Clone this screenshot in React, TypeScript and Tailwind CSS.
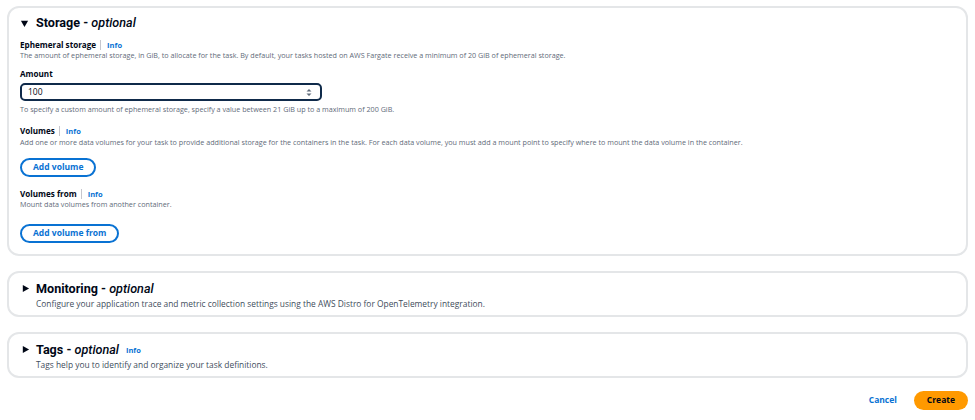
import React, { useState } from 'react';

const font = { fontFamily: '"Open Sans", "Noto Sans", Arial, sans-serif' };
const heading = { fontFamily: 'Roboto, "Open Sans", Arial, sans-serif' };

function InfoLink() {
  return <span className="ml-[4px] border-l border-[#c6c6cd] pl-[6px] text-[7.5px] font-bold leading-[10px] text-[#0972d3]">Info</span>;
}

function FieldLabel({ children, info = true }: { children: React.ReactNode; info?: boolean }) {
  return (
    <div className="flex h-[11px] items-center text-[8.1px] font-bold leading-[11px] text-[#000716]">
      {children}
      {info && <InfoLink />}
    </div>
  );
}

function Hint({ children }: { children: React.ReactNode }) {
  return <p className="h-[10px] text-[7.2px] leading-[10px] text-[#5f6b7a]">{children}</p>;
}

function OutlineButton({ children }: { children: React.ReactNode }) {
  return (
    <button className="flex h-[19px] items-center rounded-full border-2 border-[#0972d3] px-[11px] text-[8.5px] font-bold text-[#0972d3]">
      {children}
    </button>
  );
}

function Triangle({ open }: { open: boolean }) {
  return (
    <svg width="9" height="9" viewBox="0 0 10 10" className="shrink-0">
      {open ? <path d="M1 2 L9 2 L5 9 Z" fill="#000716" /> : <path d="M2 1 L9 5 L2 9 Z" fill="#000716" />}
    </svg>
  );
}

function CollapsedSection({ title, desc, info }: { title: string; desc: string; info?: boolean }) {
  return (
    <section className="h-[46px] rounded-[12px] border-2 border-[#e4e6e8] pl-[12px] pt-[7px]">
      <div className="flex h-[17px] items-center gap-[6px]">
        <Triangle open={false} />
        <h2 style={heading} className="text-[12.6px] font-bold leading-[17px] text-[#000716]">
          {title} - <em className="font-medium">optional</em>
        </h2>
        {info && <span className="ml-[1px] mt-[2px] text-[7.5px] font-bold text-[#0972d3]">Info</span>}
      </div>
      <p className="ml-[15px] mt-[1px] text-[8.4px] leading-[11px] text-[#414d5c]">{desc}</p>
    </section>
  );
}

export default function App() {
  const [amount, setAmount] = useState('100');

  return (
    <div style={font} className="h-[420px] w-[975px] overflow-hidden bg-white px-[7px] pt-[6px]">
      <section className="h-[250px] rounded-[12px] border-2 border-[#e4e6e8] pl-[11px] pt-[5px]">
        <div className="flex h-[20px] items-center gap-[7px]">
          <Triangle open />
          <h2 style={heading} className="text-[12.6px] font-bold leading-[20px] text-[#000716]">
            Storage - <em className="font-medium">optional</em>
          </h2>
        </div>

        <div className="mt-[6px]">
          <FieldLabel>Ephemeral storage</FieldLabel>
          <Hint>
            The amount of ephemeral storage, in GiB, to allocate for the task. By default, your tasks hosted on AWS Fargate receive a minimum of 20 GiB of ephemeral storage.
          </Hint>
        </div>

        <div className="mt-[8px]">
          <FieldLabel info={false}>Amount</FieldLabel>
          <div className="mt-[4px] flex h-[18px] w-[302px] items-center rounded-[5px] border-2 border-[#0f2a4a] pl-[6px] pr-[8px]">
            <input
              value={amount}
              onChange={(e) => setAmount(e.target.value)}
              className="w-full bg-transparent text-[8.5px] text-[#000716] outline-none"
            />
            <svg width="6" height="9" viewBox="0 0 6 9" className="shrink-0">
              <path d="M0.5 3.5 L3 1 L5.5 3.5 Z M0.5 5.5 L3 8 L5.5 5.5 Z" fill="#5f6b7a" />
            </svg>
          </div>
          <div className="mt-[3px]">
            <Hint>To specify a custom amount of ephemeral storage, specify a value between 21 GiB up to a maximum of 200 GiB.</Hint>
          </div>
        </div>

        <div className="mt-[11px]">
          <FieldLabel>Volumes</FieldLabel>
          <div className="mt-[1px]">
            <Hint>
              Add one or more data volumes for your task to provide additional storage for the containers in the task. For each data volume, you must add a mount point to specify where to mount the data volume in the container.
            </Hint>
          </div>
          <div className="mt-[11px]">
            <OutlineButton>Add volume</OutlineButton>
          </div>
        </div>

        <div className="mt-[11px]">
          <FieldLabel>Volumes from</FieldLabel>
          <Hint>Mount data volumes from another container.</Hint>
          <div className="mt-[15px]">
            <OutlineButton>Add volume from</OutlineButton>
          </div>
        </div>
      </section>

      <div className="mt-[15px] flex flex-col gap-[15px]">
        <CollapsedSection
          title="Monitoring"
          desc="Configure your application trace and metric collection settings using the AWS Distro for OpenTelemetry integration."
        />
        <CollapsedSection title="Tags" info desc="Tags help you to identify and organize your task definitions." />
      </div>

      <div className="mt-[13px] flex items-center justify-end gap-[17px]">
        <button className="text-[8.5px] font-bold text-[#0972d3]">Cancel</button>
        <button className="flex h-[19px] items-center rounded-full bg-[#ff9900] px-[13px] text-[8.5px] font-bold text-[#000716]">
          Create
        </button>
      </div>
    </div>
  );
}
